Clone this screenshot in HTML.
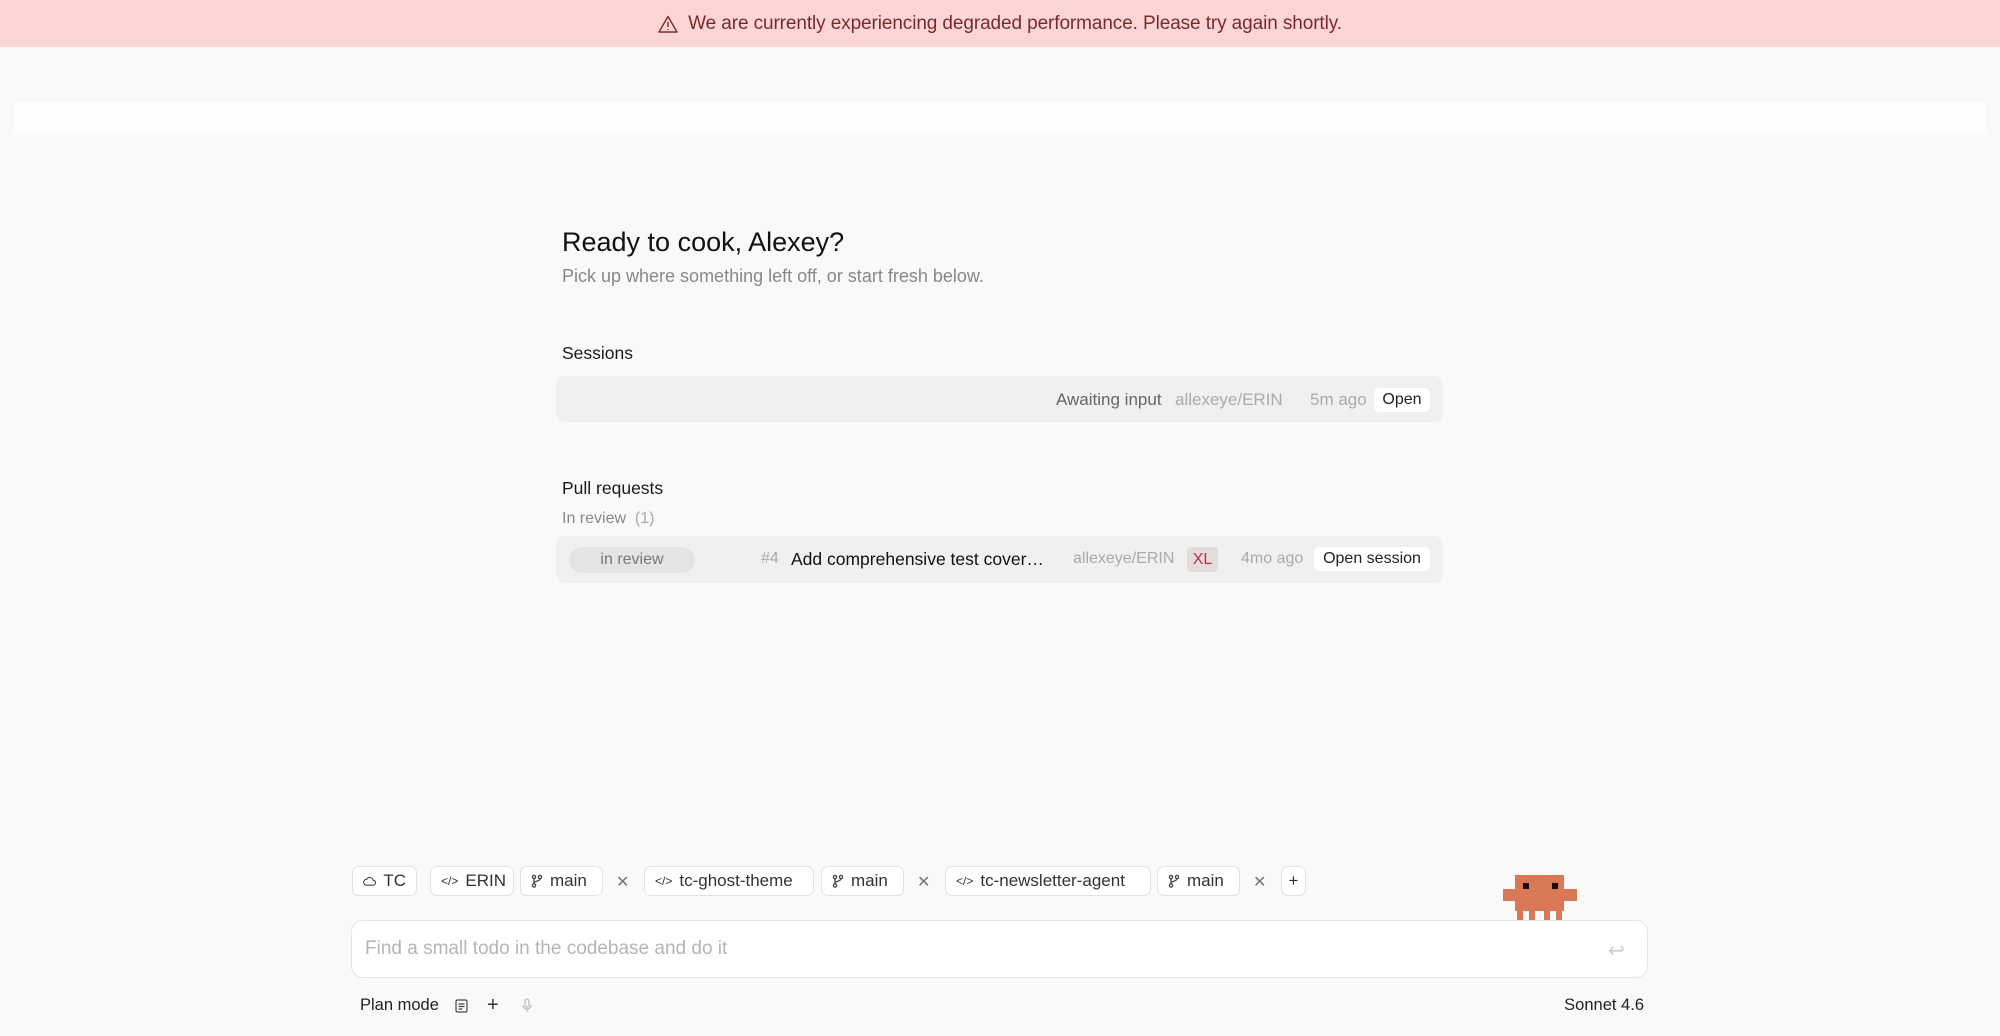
<!DOCTYPE html>
<html><head><meta charset="utf-8"><style>
*{box-sizing:border-box;margin:0;padding:0}
body{width:2000px;height:1036px;background:#f9f9f8;font-family:"Liberation Sans",sans-serif;position:relative;overflow:hidden;color:#1a1a1a}
.a{position:absolute;white-space:nowrap}
.banner{left:0;top:0;width:2000px;height:47px;background:#fcd6d6;color:#7a2a2a;font-size:19px;display:flex;align-items:center;justify-content:center;gap:10px;letter-spacing:-0.1px}
.strip{left:13px;top:102px;width:1974px;height:31px;background:#fdfdfd}
.row{background:#f0f0ef;border-radius:9px;left:556px;width:887px}
.btn{background:#fff;border-radius:5px;font-size:16px;color:#222;display:flex;align-items:center;justify-content:center;height:24px}
.chip{top:866px;height:30px;border:1px solid #e2e2e0;background:#fff;border-radius:7px;font-size:17px;color:#333;display:flex;align-items:center;gap:7px;padding:0 10px}
.x{top:872px;font-size:16px;color:#777}
</style></head><body>
<div class="a banner"><svg width="20" height="18" viewBox="0 0 20 18" fill="none" stroke="#7a2a2a" stroke-width="1.4"><path d="M10 1.5L19 17H1z" stroke-linejoin="round"/><path d="M10 7v5M10 14v1"/></svg><span>We are currently experiencing degraded performance. Please try again shortly.</span></div>
<div class="a strip"></div>
<div class="a" style="left:562px;top:227px;font-size:27px;color:#111">Ready to cook, Alexey?</div>
<div class="a" style="left:562px;top:266px;font-size:18px;color:#888">Pick up where something left off, or start fresh below.</div>
<div class="a" style="left:562px;top:343px;font-size:17.5px">Sessions</div>
<div class="a row" style="top:376px;height:46px"></div>
<div class="a" style="left:1056px;top:390px;font-size:17px;color:#666">Awaiting input</div>
<div class="a" style="left:1175px;top:390px;font-size:17px;color:#aaa">allexeye/ERIN</div>
<div class="a" style="left:1310px;top:390px;font-size:17px;color:#aaa">5m ago</div>
<div class="a btn" style="left:1374px;top:388px;width:56px">Open</div>
<div class="a" style="left:562px;top:478px;font-size:17.5px">Pull requests</div>
<div class="a" style="left:562px;top:510px;font-size:16px;color:#888">In review <span style="color:#aaa">&nbsp;(1)</span></div>
<div class="a row" style="top:536px;height:47px"></div>
<div class="a" style="left:569px;top:547px;width:126px;height:26px;border-radius:13px;background:#e4e4e3;color:#777;font-size:16px;display:flex;align-items:center;justify-content:center">in review</div>
<div class="a" style="left:761px;top:550px;font-size:16px;color:#aaa">#4</div>
<div class="a" style="left:791px;top:549px;font-size:17.5px;color:#111">Add comprehensive test cover…</div>
<div class="a" style="left:1073px;top:550px;font-size:16px;color:#aaa">allexeye/ERIN</div>
<div class="a" style="left:1187px;top:547px;width:31px;height:25px;background:#e4dcdc;border-radius:4px;color:#c0294f;font-size:16px;display:flex;align-items:center;justify-content:center">XL</div>
<div class="a" style="left:1241px;top:550px;font-size:16px;color:#aaa">4mo ago</div>
<div class="a btn" style="left:1314px;top:547px;width:116px">Open session</div>

<div class="a chip" style="left:352px;width:65px"><svg width="16" height="12" viewBox="0 0 16 12" fill="none" stroke="#444" stroke-width="1.3"><path d="M4 11h8a3 3 0 0 0 0-6 4 4 0 0 0-7.5-1A3.5 3.5 0 0 0 4 11z"/></svg>TC</div>
<div class="a chip" style="left:430px;width:84px"><span style="font-size:12px">&lt;/&gt;</span>ERIN</div>
<div class="a chip" style="left:520px;width:83px"><svg width="12" height="14" viewBox="0 0 12 14" fill="none" stroke="#444" stroke-width="1.3"><circle cx="3" cy="3" r="1.6"/><circle cx="3" cy="11.5" r="1.6"/><circle cx="9" cy="3" r="1.6"/><path d="M3 4.6v5.3M9 4.6c0 3-6 2-6 5"/></svg>main</div>
<div class="a x" style="left:616px">✕</div>
<div class="a chip" style="left:644px;width:170px"><span style="font-size:12px">&lt;/&gt;</span>tc-ghost-theme</div>
<div class="a chip" style="left:821px;width:83px"><svg width="12" height="14" viewBox="0 0 12 14" fill="none" stroke="#444" stroke-width="1.3"><circle cx="3" cy="3" r="1.6"/><circle cx="3" cy="11.5" r="1.6"/><circle cx="9" cy="3" r="1.6"/><path d="M3 4.6v5.3M9 4.6c0 3-6 2-6 5"/></svg>main</div>
<div class="a x" style="left:917px">✕</div>
<div class="a chip" style="left:945px;width:206px"><span style="font-size:12px">&lt;/&gt;</span>tc-newsletter-agent</div>
<div class="a chip" style="left:1157px;width:83px"><svg width="12" height="14" viewBox="0 0 12 14" fill="none" stroke="#444" stroke-width="1.3"><circle cx="3" cy="3" r="1.6"/><circle cx="3" cy="11.5" r="1.6"/><circle cx="9" cy="3" r="1.6"/><path d="M3 4.6v5.3M9 4.6c0 3-6 2-6 5"/></svg>main</div>
<div class="a x" style="left:1253px">✕</div>
<div class="a chip" style="left:1281px;width:25px;padding:0;justify-content:center">+</div>

<svg class="a" style="left:1503px;top:875px" width="74" height="46" viewBox="0 0 74 46">
<g fill="#d97757"><rect x="12" y="0" width="49" height="36"/><rect x="0" y="14" width="74" height="12"/><rect x="14" y="36" width="6" height="10"/><rect x="26" y="36" width="6" height="10"/><rect x="41" y="36" width="6" height="10"/><rect x="53" y="36" width="6" height="10"/></g>
<rect x="20" y="8" width="6" height="6" fill="#111"/><rect x="49" y="8" width="6" height="6" fill="#111"/></svg>
<div class="a" style="left:351px;top:920px;width:1297px;height:58px;background:#fff;border:1px solid #e4e4e2;border-radius:12px"></div>
<div class="a" style="left:365px;top:938px;font-size:19px;color:#b5b5b5">Find a small todo in the codebase and do it</div>
<div class="a" style="left:1608px;top:938px;font-size:20px;color:#ccc">↩</div>
<div class="a" style="left:360px;top:996px;font-size:16.5px;color:#222">Plan mode</div>
<svg class="a" style="left:455px;top:999px" width="13" height="14" viewBox="0 0 13 14" fill="none" stroke="#444" stroke-width="1.2"><rect x="1" y="1" width="11" height="12" rx="1.5"/><path d="M3.5 5h6M3.5 7.5h6M3.5 10h4"/></svg>
<div class="a" style="left:487px;top:994px;font-size:20px;color:#333">+</div>
<svg class="a" style="left:522px;top:998px" width="10" height="15" viewBox="0 0 10 15" fill="none" stroke="#bbb" stroke-width="1.2"><rect x="3" y="1" width="4" height="8" rx="2"/><path d="M1 7a4 4 0 0 0 8 0M5 11v3"/></svg>
<div class="a" style="right:356px;top:996px;font-size:16.5px;color:#222">Sonnet 4.6</div>
</body></html>
